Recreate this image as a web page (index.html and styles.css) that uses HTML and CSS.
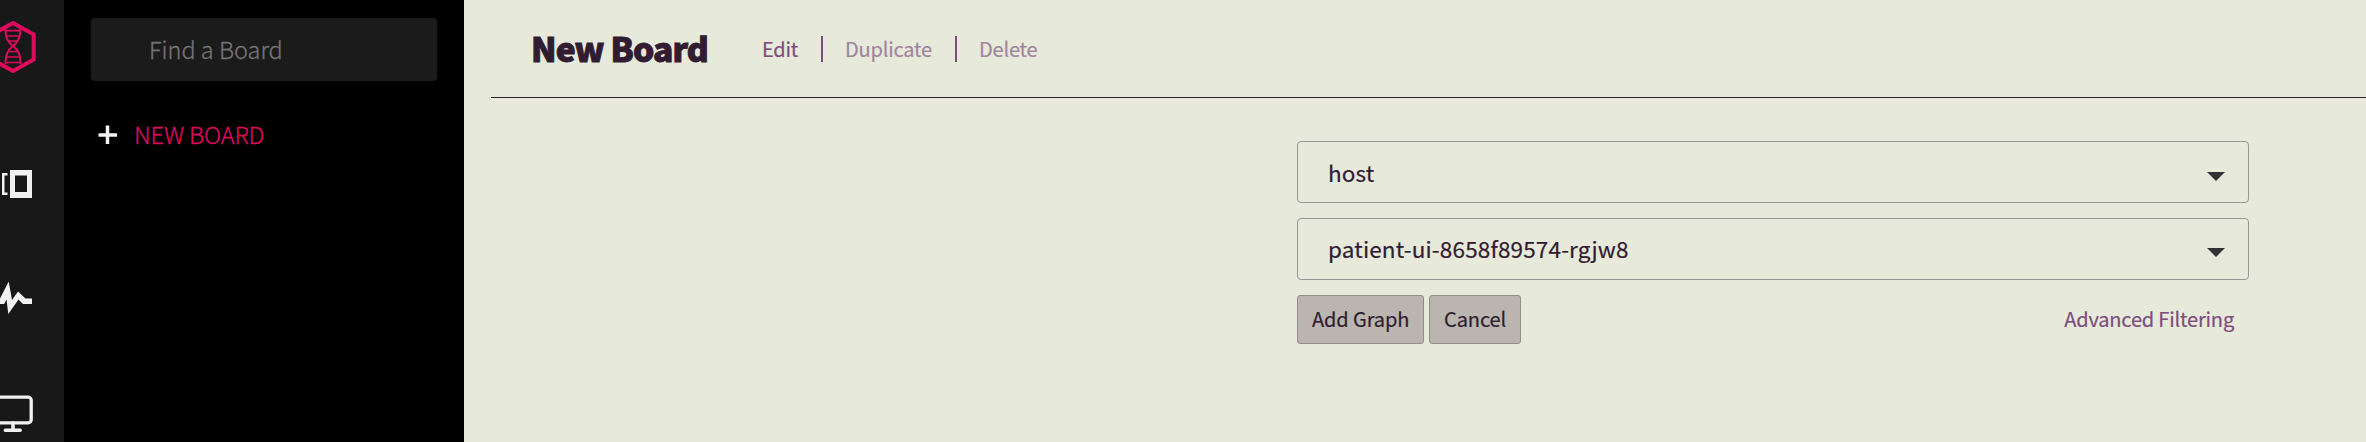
FILE: index.html
```html
<!DOCTYPE html>
<html lang="en">
<head>
<meta charset="utf-8">
<title>New Board</title>
<link rel="stylesheet" href="styles.css">
</head>
<body>
<div class="app">
  <nav class="rail">
    <svg class="rail-icons" width="64" height="442" viewBox="0 0 64 442">
      <g fill="none" stroke="#dd0a5c">
        <path d="M13 23 L33.7 34.5 V59.5 L13 71 L-8 59.5 V34.5 Z" stroke-width="4" stroke-linejoin="round"/>
        <path d="M5.500 29 C5.500 39 8 42 13 46 C18 50 20.500 54 20.500 64 M20.500 29 C20.500 37 18.500 42 13 46 C8 50 5.500 54 5.500 64" stroke-width="2"/>
        <path d="M6 30.700 H20 M6.500 36 H19.500 M8.500 41 H17.500 M9.500 51.500 H17 M7 57 H19.500 M6 62.500 H20" stroke-width="1.700"/>
      </g>
      <path fill="#f1f1f1" fill-rule="evenodd" d="M10 170 H32 V198 H10 Z M15 175.500 V192 H27 V175.500 Z"/>
      <path fill="#f1f1f1" d="M2 173 H7.500 V175.500 H4.500 V192.500 H7.500 V195 H2 Z"/>
      <path fill="#f1f1f1" d="M0 298.500 L8.700 281.500 L12 300 L18 291.500 L25.500 298.500 H32 V304 H23 L18.500 299.500 L8.300 314 L6.500 299.500 L4.200 304 H0 Z"/>
      <g fill="none" stroke="#f1f1f1" stroke-linecap="round">
        <rect x="-8" y="397.200" width="39.200" height="25.600" rx="3" stroke-width="3.300"/>
        <path d="M13 423 V430 M5.300 430.300 H20.200" stroke-width="3.500"/>
      </g>
    </svg>
  </nav>
  <aside class="sidebar">
    <div class="search"><span class="label find">Find a Board</span></div>
    <div class="new-board">
      <svg width="20" height="20" viewBox="0 0 20 20"><path d="M.5 10 H19 M9.500 .5 V19" stroke="#f4f4f4" stroke-width="3.500"/></svg>
      <span class="label new-label">NEW BOARD</span>
    </div>
  </aside>
  <main class="main">
    <header class="header">
      <h1 class="title">New Board</h1>
      <span class="action edit">Edit</span>
      <span class="divider"></span>
      <span class="action duplicate">Duplicate</span>
      <span class="divider"></span>
      <span class="action delete">Delete</span>
    </header>
    <section class="form">
      <div class="select"><span class="value">host</span><svg class="caret" width="18" height="9" viewBox="0 0 18 9"><path d="M0 0 H18 L9 9 Z" fill="#333"/></svg></div>
      <div class="select second"><span class="value long">patient-ui-8658f89574-rgjw8</span><svg class="caret" width="18" height="9" viewBox="0 0 18 9"><path d="M0 0 H18 L9 9 Z" fill="#333"/></svg></div>
      <div class="buttons">
        <div class="button add"><span>Add Graph</span></div>
        <div class="button cancel"><span>Cancel</span></div>
        <span class="advanced">Advanced Filtering</span>
      </div>
    </section>
  </main>
</div>
</body>
</html>
```
FILE: styles.css
```css
* { box-sizing: border-box; }
body { margin: 0; font-family: "Noto Sans CJK SC", "Noto Sans", sans-serif; white-space: nowrap; }
.app { display: flex; width: 2366px; height: 442px; overflow: hidden; background: #e7e9db; }
.rail { width: 64px; background: #181818; }
.rail-icons { display: block; }
.sidebar { width: 400px; padding: 18px 27px 0; background: #000; }
.search { height: 63px; padding: 0 0 1px 58px; display: flex; align-items: center; border-radius: 4px; background: #1b1b1b; }
.label { font-size: 23.5px; line-height: 36px; font-weight: 300; -webkit-text-stroke: .3px currentColor; }
.find { color: #757575; }
.new-board { display: flex; align-items: center; gap: 16px; height: 37px; padding-left: 7px; margin-top: 35px; }
.new-label { padding-bottom: 2px; letter-spacing: -.1px; color: #dd0a5c; }
.main { flex: 1; padding-left: 27px; }
.header { display: flex; align-items: center; height: 98px; padding-left: 40px; border-bottom: 1px solid #2d1b2d; color: #7d4e7d; }
.title { margin: 0; padding-bottom: 2px; width: 230px; font-size: 33.5px; line-height: 40px; font-weight: 900; letter-spacing: -.85px; -webkit-text-stroke: 1px currentColor; color: #311c31; }
.action { font-size: 20px; line-height: 30px; letter-spacing: -.2px; -webkit-text-stroke: .2px currentColor; }
.edit { width: 60px; padding-left: 1px; }
.duplicate { width: 112px; padding-left: 2px; opacity: .65; }
.delete { padding-left: 2px; opacity: .65; }
.divider { width: 2px; height: 26px; margin-right: 20px; background: #7d4e7d; }
.form { width: 952px; margin: 43px 0 0 806px; }
.select { display: flex; justify-content: space-between; align-items: center; height: 62px; padding: 0 23px 0 30px; border: 1px solid #969696; border-radius: 4px; color: #311c31; }
.second { margin-top: 15px; }
.value { font-size: 22.5px; line-height: 34px; letter-spacing: .16px; -webkit-text-stroke: .2px currentColor; }
.long { padding-bottom: 2px; }
.caret { margin-top: 8px; }
.second .caret { margin-top: 6px; }
.buttons { display: flex; gap: 5px; margin-top: 15px; }
.button { display: flex; align-items: center; height: 49px; padding: 0 0 1px 14px; border: 1px solid #918f87; border-radius: 3px; background: #bab6af; color: #311c31; font-size: 20px; line-height: 30px; letter-spacing: -.1px; -webkit-text-stroke: .2px currentColor; }
.add { width: 127px; }
.cancel { width: 92px; }
.advanced { margin-left: auto; padding-right: 15px; font-size: 20px; line-height: 48px; letter-spacing: -.18px; color: #7d4e7d; -webkit-text-stroke: .2px currentColor; }
```
